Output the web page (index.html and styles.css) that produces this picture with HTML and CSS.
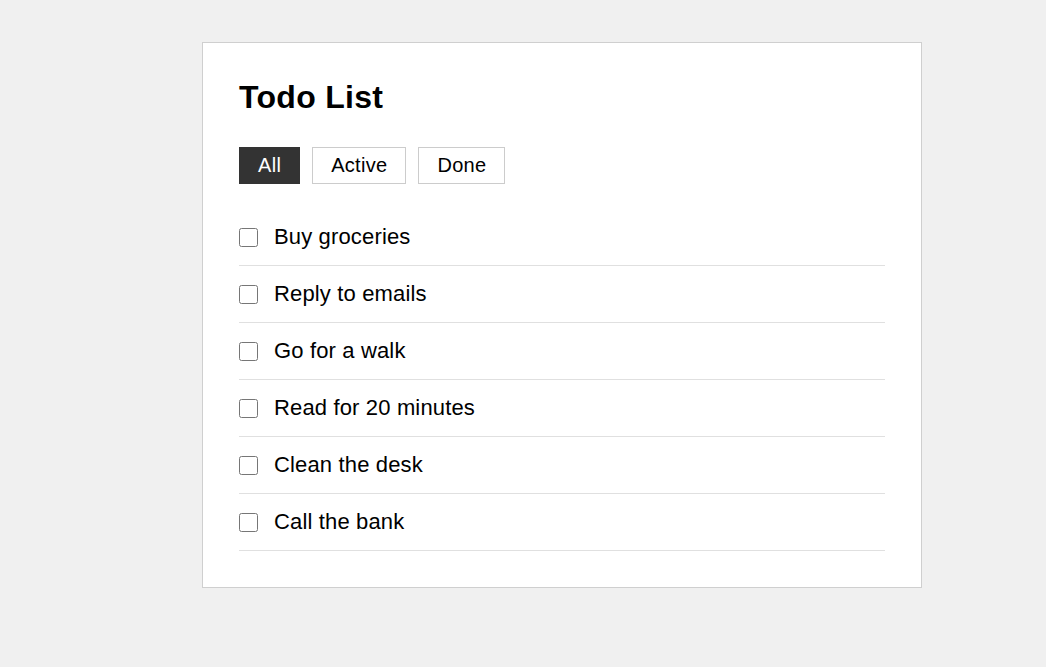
FILE: index.html
```html
<!DOCTYPE html>
<html lang="en">
<head>
<meta charset="utf-8">
<title>Todo List</title>
<link rel="stylesheet" href="styles.css">
</head>
<body>
<main class="card">
  <h1 class="title">Todo List</h1>
  <div class="filters">
    <button class="filter filter-active">All</button>
    <button class="filter">Active</button>
    <button class="filter">Done</button>
  </div>
  <ul class="todos">
    <li class="todo"><input type="checkbox" class="check"><span class="label">Buy groceries</span></li>
    <li class="todo"><input type="checkbox" class="check"><span class="label">Reply to emails</span></li>
    <li class="todo"><input type="checkbox" class="check"><span class="label">Go for a walk</span></li>
    <li class="todo"><input type="checkbox" class="check"><span class="label">Read for 20 minutes</span></li>
    <li class="todo"><input type="checkbox" class="check"><span class="label">Clean the desk</span></li>
    <li class="todo"><input type="checkbox" class="check"><span class="label">Call the bank</span></li>
  </ul>
</main>
</body>
</html>
```
FILE: styles.css
```css
html, body {
  margin: 0;
  padding: 0;
  background: #f0f0f0;
  font-family: "Liberation Sans", Arial, sans-serif;
  color: #000;
}
body {
  padding: 42px 0 0 202px;
}
.card {
  box-sizing: border-box;
  width: 720px;
  background: #fff;
  border: 1px solid #cfcfcf;
  padding: 36px;
}
.title {
  margin: 0 0 31px;
  font-size: 32px;
  font-weight: bold;
  line-height: normal;
  letter-spacing: 0.3px;
  color: #000;
}
.filters {
  display: flex;
  gap: 12px;
  margin-bottom: 25px;
}
.filter {
  font-family: "Liberation Sans", Arial, sans-serif;
  font-size: 20px;
  line-height: 23px;
  letter-spacing: 0.3px;
  padding: 6px 18px;
  border: 1px solid #cccccc;
  background: #fff;
  color: #000;
  border-radius: 0;
  margin: 0;
}
.filter-active {
  background: #333;
  border-color: #333;
  color: #fff;
}
.todos {
  list-style: none;
  margin: 0;
  padding: 0;
}
.todo {
  display: flex;
  align-items: center;
  gap: 16px;
  padding: 16px 0;
  line-height: 24px;
  font-size: 22px;
  letter-spacing: 0.15px;
  border-bottom: 1px solid #e0e0e0;
}
.check {
  width: 19px;
  height: 19px;
  margin: 0;
  flex: none;
}
.label {
  color: #000;
}
```
